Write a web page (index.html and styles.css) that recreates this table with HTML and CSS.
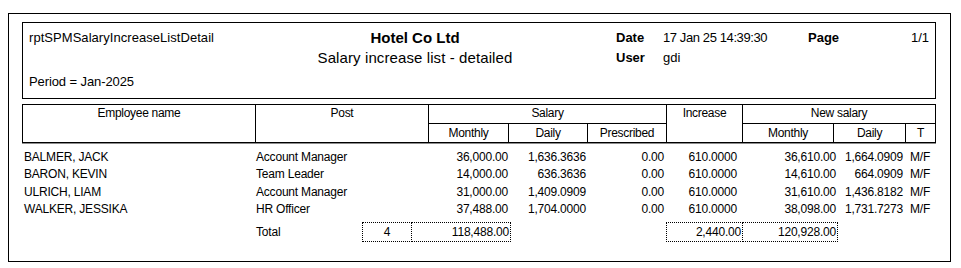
FILE: index.html
```html
<!DOCTYPE html>
<html>
<head>
<meta charset="utf-8">
<link rel="stylesheet" href="styles.css">
</head>
<body>
<div class="frame">
  <div class="report-head">
    <div class="rpt-name">rptSPMSalaryIncreaseListDetail</div>
    <div class="company">Hotel Co Ltd</div>
    <div class="subtitle">Salary increase list - detailed</div>
    <div class="meta">
      <span class="meta-label">Date</span>
      <span class="meta-value date">17 Jan 25 14:39:30</span>
      <span class="meta-label">Page</span>
      <span class="meta-value page">1/1</span>
      <span class="meta-label">User</span>
      <span class="meta-value">gdi</span>
    </div>
    <div class="period">Period = Jan-2025</div>
  </div>

  <div class="col-head">
    <div class="hc c-emp">Employee name</div>
    <div class="hc c-post">Post</div>
    <div class="hc c-sal">Salary</div>
    <div class="hc c-sm">Monthly</div>
    <div class="hc c-sd">Daily</div>
    <div class="hc c-sp">Prescribed</div>
    <div class="hc c-inc">Increase</div>
    <div class="hc c-new">New salary</div>
    <div class="hc c-nm">Monthly</div>
    <div class="hc c-nd">Daily</div>
    <div class="hc c-t">T</div>
  </div>

  <div class="rows">
    <div class="row">
      <span class="name">BALMER, JACK</span><span class="post">Account Manager</span>
      <span class="num">36,000.00</span><span class="num">1,636.3636</span><span class="num">0.00</span><span class="num">610.0000</span>
      <span class="num">36,610.00</span><span class="num">1,664.0909</span><span class="t">M/F</span>
    </div>
    <div class="row">
      <span class="name">BARON, KEVIN</span><span class="post">Team Leader</span>
      <span class="num">14,000.00</span><span class="num">636.3636</span><span class="num">0.00</span><span class="num">610.0000</span>
      <span class="num">14,610.00</span><span class="num">664.0909</span><span class="t">M/F</span>
    </div>
    <div class="row">
      <span class="name">ULRICH, LIAM</span><span class="post">Account Manager</span>
      <span class="num">31,000.00</span><span class="num">1,409.0909</span><span class="num">0.00</span><span class="num">610.0000</span>
      <span class="num">31,610.00</span><span class="num">1,436.8182</span><span class="t">M/F</span>
    </div>
    <div class="row">
      <span class="name">WALKER, JESSIKA</span><span class="post">HR Officer</span>
      <span class="num">37,488.00</span><span class="num">1,704.0000</span><span class="num">0.00</span><span class="num">610.0000</span>
      <span class="num">38,098.00</span><span class="num">1,731.7273</span><span class="t">M/F</span>
    </div>
  </div>

  <div class="totals">
    <span class="total-label">Total</span>
    <span class="box box-count">4</span>
    <span class="box box-monthly joined">118,488.00</span>
    <span class="box box-inc">2,440.00</span>
    <span class="box box-new joined">120,928.00</span>
  </div>
</div>
</body>
</html>
```

FILE: styles.css
```css
html, body {
  margin: 0;
  padding: 0;
  background: #fff;
}

body {
  font-family: "Liberation Sans", Arial, sans-serif;
  color: #000;
}

.frame {
  box-sizing: border-box;
  margin: 13px 0 0 8px;
  width: 943px;
  height: 249px;
  border: 1px solid #000;
  padding: 8px 14px 0 13px;
}

/* ---------- report header ---------- */
.report-head {
  box-sizing: border-box;
  height: 77px;
  border: 1px solid #000;
  padding: 5px 6px 0 6px;
  display: grid;
  grid-template-columns: 271px 230px 1fr;
  grid-template-rows: 20px 20px 24px;
  line-height: 20px;
}

.rpt-name {
  grid-column: 1;
  grid-row: 1;
  font-size: 13px;
  letter-spacing: 0.05px;
}

.period {
  grid-column: 1;
  grid-row: 3;
  align-self: end;
  font-size: 13px;
  letter-spacing: -0.1px;
}

.company {
  grid-column: 2;
  grid-row: 1;
  text-align: center;
  font-size: 15px;
  font-weight: bold;
}

.subtitle {
  grid-column: 2;
  grid-row: 2;
  text-align: center;
  font-size: 15px;
  letter-spacing: 0.1px;
}

.meta {
  grid-column: 3;
  grid-row: 1 / 3;
  padding-left: 86px;
  display: grid;
  grid-template-columns: 47px 145px auto 1fr;
  grid-template-rows: 20px 20px;
  font-size: 13px;
}

.meta-label {
  font-weight: bold;
}

.meta-value.date {
  font-size: 13px;
  letter-spacing: -0.4px;
}

.meta-value.page {
  text-align: right;
}

/* ---------- column header ---------- */
.col-head {
  margin-top: 5px;
  display: grid;
  grid-template-columns: 233px 173px 80px 79px 79px 76px 91px 72px 30px;
  grid-template-rows: 19px 19px;
  border-top: 1px solid #000;
  border-left: 1px solid #000;
  box-shadow: 0 1px 0 #8c8c8c;
  font-size: 12px;
  letter-spacing: -0.3px;
}

.hc {
  border-right: 1px solid #000;
  border-bottom: 1px solid #000;
  text-align: center;
  line-height: 17px;
  white-space: nowrap;
}

.c-emp { grid-column: 1; grid-row: 1 / 3; }
.c-post { grid-column: 2; grid-row: 1 / 3; }
.c-sal { grid-column: 3 / 6; grid-row: 1; }
.c-sm { grid-column: 3; grid-row: 2; line-height: 18px; }
.c-sd { grid-column: 4; grid-row: 2; line-height: 18px; }
.c-sp { grid-column: 5; grid-row: 2; line-height: 18px; }
.c-inc { grid-column: 6; grid-row: 1 / 3; }
.c-new { grid-column: 7 / 10; grid-row: 1; }
.c-nm { grid-column: 7; grid-row: 2; line-height: 18px; }
.c-nd { grid-column: 8; grid-row: 2; line-height: 18px; }
.c-t { grid-column: 9; grid-row: 2; line-height: 18px; }

/* ---------- data rows ---------- */
.rows {
  margin-top: 6px;
  font-size: 12px;
  letter-spacing: -0.2px;
}

.row {
  display: grid;
  grid-template-columns: 233px 173px 80px 78px 78px 73px 99px 67px 33px;
  height: 17.33px;
  line-height: 17.33px;
  white-space: nowrap;
}

.name { padding-left: 2px; }
.post { padding-left: 1px; }
.num { text-align: right; }
.t { padding-left: 7px; }

/* ---------- totals ---------- */
.totals {
  margin-top: 4px;
  display: flex;
  align-items: stretch;
  height: 20px;
  font-size: 12px;
  letter-spacing: -0.2px;
  line-height: 18px;
  white-space: nowrap;
}

.total-label {
  margin-left: 234px;
  width: 106px;
  line-height: 20px;
}

.box {
  box-sizing: border-box;
  border: 1px dotted #000;
  padding-right: 1px;
  text-align: right;
}

.box.joined {
  border-left: none;
}

.box-count {
  width: 50px;
  text-align: center;
  padding-right: 0;
}

.box-monthly {
  width: 99px;
}

.box-inc {
  margin-left: 155px;
  width: 77px;
}

.box-new {
  width: 95px;
}
```
